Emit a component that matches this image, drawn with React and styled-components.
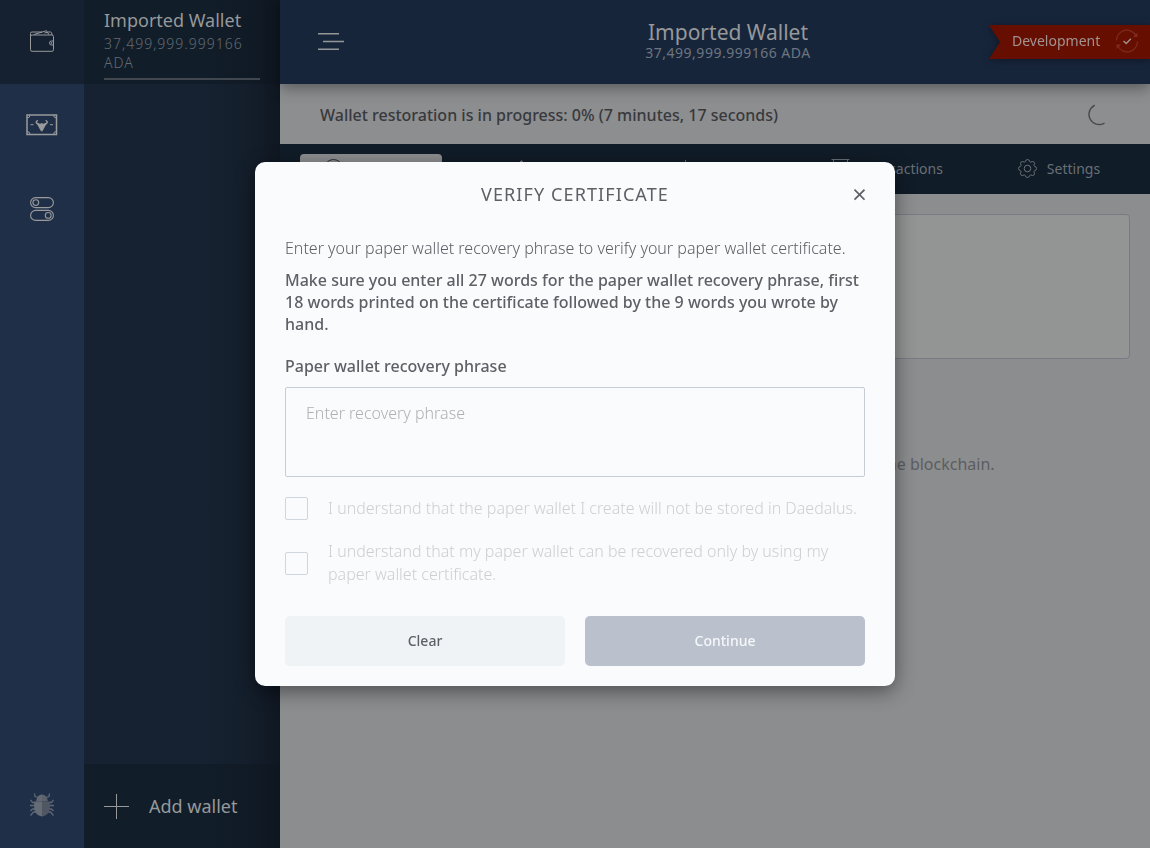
import React from 'react';
import styled, { createGlobalStyle, css } from 'styled-components';

const GlobalStyle = createGlobalStyle`
  * { box-sizing: border-box; }
  body {
    margin: 0;
    font-family: 'Noto Sans', 'Open Sans', sans-serif;
    font-size: 16px;
    overflow: hidden;
  }
`;

const Shell = styled.div`
  display: flex;
  width: 100vw;
  height: 100vh;
  overflow: hidden;
  background: #8c8d8f;
`;

/* Sidebar */
const Rail = styled.nav`
  display: flex;
  flex-direction: column;
  flex: none;
  width: 84px;
  background: #202f48;
`;

const RailItem = styled.div`
  display: flex;
  align-items: center;
  justify-content: center;
  height: 84px;
  padding-bottom: 2px;
  background: ${(p) => (p.$active ? '#152131' : 'transparent')};
  ${(p) => p.$last && css`margin-top: auto;`}
  svg { display: block; }
`;

const edgeShade = 'linear-gradient(to right, rgba(14, 20, 30, 0) 120px, rgba(14, 20, 30, 0.3) 165px, rgba(14, 20, 30, 0.8) 196px)';

const WalletPanel = styled.aside`
  display: flex;
  flex-direction: column;
  justify-content: space-between;
  flex: none;
  width: 196px;
  background: ${edgeShade}, #162231;
`;

const WalletItem = styled.div`
  height: 84px;
  padding: 8px 20px 0;
  background: ${edgeShade}, #111d29;
`;

const WalletName = styled.div`
  font-size: 18px;
  line-height: 24px;
  color: #96989a;
`;

const WalletBalance = styled.div`
  width: 145px;
  margin-top: 2px;
  font-size: 14px;
  font-weight: 300;
  line-height: 19px;
  letter-spacing: 1px;
  color: #646b74;
`;

const WalletProgress = styled.div`
  height: 2px;
  margin-top: 6px;
  background: #41474e;
`;

const AddWallet = styled.div`
  display: flex;
  align-items: center;
  gap: 20px;
  height: 84px;
  padding-left: 20px;
  font-size: 18px;
  color: #96989a;
  background: ${edgeShade}, #111d29;
`;

/* Main area */
const Main = styled.main`
  display: flex;
  flex-direction: column;
  flex: 1;
  min-width: 0;
`;

const TopBar = styled.header`
  position: relative;
  z-index: 1;
  display: flex;
  align-items: center;
  height: 84px;
  padding-left: 38px;
  background: #17253b;
  box-shadow: 0 4px 14px rgba(0, 0, 0, 0.38);
`;

const TopTitle = styled.div`
  flex: 1;
  margin-left: 123px;
  padding-bottom: 3px;
  text-align: center;
`;

const TopName = styled.div`
  font-size: 21px;
  line-height: 24px;
  color: #96989a;
`;

const TopBalance = styled.div`
  font-size: 14px;
  line-height: 17px;
  letter-spacing: 0.5px;
  color: #6d757f;
`;

const RibbonShadow = styled.div`
  filter: drop-shadow(0 1px 4px rgba(0, 0, 0, 0.4));
`;

const Ribbon = styled.div`
  display: flex;
  align-items: center;
  justify-content: space-between;
  width: 161px;
  height: 34px;
  padding: 0 11px 2px 23px;
  clip-path: polygon(0 0, 100% 0, 100% 100%, 0 100%, 11px 50%);
  background: #660e00;
  font-size: 14px;
  color: #a09391;
`;

const RibbonLabel = styled.span`
  padding-bottom: 2px;
`;

const Restoration = styled.div`
  display: flex;
  align-items: center;
  justify-content: space-between;
  height: 60px;
  padding: 2px 40px 0 40px;
  background: #8d8e90;
  font-weight: 500;
  color: #38393c;
`;

const Tabs = styled.div`
  display: flex;
  gap: 30px;
  height: 50px;
  padding: 10px 20px 0;
  background: #101c28;
`;

const Tab = styled.div`
  display: flex;
  flex: 1;
  align-items: center;
  justify-content: center;
  gap: 10px;
  height: 30px;
  padding-bottom: 2px;
  border-radius: 4px;
  font-size: 14px;
  font-weight: ${(p) => (p.$active ? 500 : 400)};
  white-space: nowrap;
  color: ${(p) => (p.$active ? '#26303c' : '#696f75')};
  background: ${(p) => (p.$active ? '#8d8e90' : 'transparent')};
`;

const Content = styled.section`
  padding: 20px;
`;

const SummaryCard = styled.div`
  height: 145px;
  border: 1px solid #777b84;
  border-radius: 4px;
  background: #939595;
`;

const SyncMessage = styled.p`
  margin: 93px 0 0;
  line-height: 24px;
  text-align: center;
  white-space: nowrap;
  color: #5c5d5f;
`;

/* Dialog */
const Overlay = styled.div`
  position: fixed;
  inset: 0;
  z-index: 5;
  display: flex;
  align-items: center;
  justify-content: center;
`;

const Dialog = styled.div`
  width: 640px;
  height: 524px;
  padding: 20px 30px;
  border-radius: 10px;
  background: #fafbfd;
  box-shadow: 0 5px 20px rgba(0, 0, 0, 0.45);
  color: #5e6066;
`;

const DialogHeader = styled.div`
  display: grid;
  grid-template-columns: 12px 1fr 12px;
  align-items: center;
  height: 25px;
`;

const DialogTitle = styled.h1`
  grid-column: 2;
  margin: 0;
  font-size: 18px;
  font-weight: 400;
  line-height: 25px;
  letter-spacing: 1.1px;
  text-align: center;
  text-transform: uppercase;
`;

const Paragraph = styled.p`
  margin: ${(p) => (p.$strong ? '10px 0 20px' : '30px 0 0')};
  font-weight: ${(p) => (p.$strong ? 500 : 300)};
  line-height: 22px;
`;

const FieldLabel = styled.label`
  display: block;
  margin-bottom: 10px;
  font-weight: 500;
  line-height: 22px;
`;

const PhraseInput = styled.textarea`
  display: block;
  width: 100%;
  height: 90px;
  padding: 14px 20px;
  border: 1px solid #c6cdd6;
  border-radius: 2px;
  outline: none;
  resize: none;
  background: transparent;
  font: 300 16px/22px 'Noto Sans', 'Open Sans', sans-serif;
  &::placeholder { color: #afb0b3; opacity: 1; }
`;

const CheckRow = styled.div`
  display: flex;
  align-items: center;
  gap: 20px;
  margin-top: 20px;
  font-weight: 300;
  line-height: 23px;
  color: #cecfd2;
`;

const CheckBox = styled.span`
  flex: none;
  width: 23px;
  height: 23px;
  border: 1px solid #cfd6e0;
  border-radius: 2px;
`;

const Actions = styled.div`
  display: flex;
  gap: 20px;
  margin-top: 30px;
`;

const Button = styled.button`
  flex: 1;
  height: 50px;
  padding: 0 0 2px;
  border: 0;
  border-radius: 5px;
  font: 500 14px 'Noto Sans', 'Open Sans', sans-serif;
  color: ${(p) => (p.$primary ? '#f5f7f9' : '#5e6066')};
  background: ${(p) => (p.$primary ? '#bac1cd' : '#eff3f6')};
`;

const WalletIcon = () => (
  <svg width="24" height="22" viewBox="0 0 24 22" fill="none" stroke="#989a9b" strokeWidth="1">
    <rect x=".5" y="5" width="23" height="16.3" rx="1.6" />
    <path d="M.5 6.500V3.400Q.5 2 2 2h10M4 4.500 16.500.7l2.400 4M14.500 3l3-.8M18 2h2.600q1.400 0 1.400 3" />
    <path d="M23.500 11h-2a2 2 0 0 0 0 4h2" />
    <circle cx="21.600" cy="13" r=".5" />
  </svg>
);

const AdaIcon = () => (
  <svg width="32" height="22" viewBox="0 0 32 22" fill="none" stroke="#989a9b">
    <rect x="1" y="1" width="29.500" height="19.500" strokeWidth="1.500" />
    <path d="M1 4a3 3 0 0 0 3-3M27.500 1a3 3 0 0 0 3 3M30.500 17.500a3 3 0 0 0-3 3M4 20.500a3 3 0 0 0-3-3M4.500 10.700h3M24 10.700h3" />
    <path d="M11.800 6.300Q8 9 13 10M19.700 6.300Q23.500 9 18.500 10" strokeWidth="1.400" />
    <path
      stroke="none"
      fill="#989a9b"
      d="M10.500 9.500l3 .2 2.200-.5 2.200.5 3-.2-1.500 2.200-1.300 2.500-1.700 3h-1.400l-1.700-3-1.300-2.500Z"
    />
  </svg>
);

const TogglesIcon = () => (
  <svg width="24" height="24" viewBox="0 0 24 24" fill="none" stroke="#989a9b" strokeWidth="1.100">
    <rect x=".6" y=".6" width="22.800" height="10" rx="5" />
    <circle cx="5.800" cy="5.600" r="2.900" />
    <rect x=".6" y="13.400" width="22.800" height="10" rx="5" />
    <circle cx="18.200" cy="18.400" r="2.900" />
  </svg>
);

const BugIcon = () => (
  <svg width="24" height="24" viewBox="0 0 24 24" fill="none" stroke="#5d6775" strokeWidth="1.300">
    <path d="M8 4.500 5 3.500 4.500.5M16 4.500l3-1 .5-3M5 9.500H2.500L.5 6.800M19 9.500h2.500l2-2.700M5 12.500H0M19 12.500h5M5 16H2.500l-2 2M19 16h2.500l2 2M6 19H3.500L.5 22.500M18 19h2.500l3 3.500" />
    <path stroke="none" fill="#626973" d="M12 1.500q-5 0-6 7h6Z" />
    <path stroke="none" fill="#5b626d" d="M12 1.500q5 0 6 7h-6Z" />
    <path stroke="none" fill="#666c76" d="M12 8.500H4.200V15.500Q4.800 22 12 23.500Z" />
    <path stroke="none" fill="#505763" d="M12 8.500h7.800V15.500Q19.200 22 12 23.500Z" />
  </svg>
);

const PlusIcon = () => (
  <svg width="25" height="25" viewBox="0 0 25 25" stroke="#96989a">
    <path d="M12.500 0v25M0 12.500h25" />
  </svg>
);

const MenuIcon = () => (
  <svg width="26" height="18" viewBox="0 0 26 18" stroke="#949698" strokeWidth="1.400">
    <path d="M0 .8h21M5 8.500h21M0 16.200h21" />
  </svg>
);

const SyncedIcon = () => (
  <svg width="24" height="24" viewBox="0 0 24 24" fill="none">
    <g stroke="#7e2b20" strokeWidth="1.200">
      <path d="M1.500 11.500A10.300 10.300 0 0 1 21 6.800M22.500 12.500A10.300 10.300 0 0 1 3 17.200" />
      <path fill="#7e2b20" stroke="none" d="M22.500 3.500v4.500h-4.500ZM1.500 20v-4.500H6Z" />
    </g>
    <path d="m8.500 12 2.700 2.500 4.700-4.700" stroke="#a09391" strokeWidth="1.300" />
  </svg>
);

const SpinnerIcon = () => (
  <svg width="22" height="22" viewBox="0 0 22 22" fill="none" stroke="#4a4b4e" strokeWidth="1.500" strokeLinecap="round">
    <path d="M6.300 1.500A10 10 0 0 0 16 19.300" />
  </svg>
);

const SummaryIcon = () => (
  <svg width="19" height="19" viewBox="0 0 19 19" fill="none" stroke="#26303c">
    <circle cx="9.500" cy="9.500" r="9" />
    <path d="M9.500 4v6l4 2" />
  </svg>
);

const SendIcon = () => (
  <svg width="19" height="19" viewBox="0 0 19 19" fill="none" stroke="#696f75">
    <path d="M9.500 14V1.500M6 5 9.500 1.500 13 5M1 11v7h17v-7" />
  </svg>
);

const ReceiveIcon = () => (
  <svg width="19" height="19" viewBox="0 0 19 19" fill="none" stroke="#696f75">
    <path d="M9.500 1v13M6 10.500 9.500 14l3.500-3.500M1 11v7h17v-7" />
  </svg>
);

const TransactionsIcon = () => (
  <svg width="19" height="19" viewBox="0 0 19 19" fill="none" stroke="#696f75">
    <path d="M.5.5h18M2.500.5v18l2.300-2 2.300 2 2.400-2 2.300 2 2.300-2 2.400 2V.5M6 6h7M6 10h7" />
  </svg>
);

const GearIcon = () => (
  <svg width="19" height="19" viewBox="0 0 19 19" fill="none" stroke="#696f75" strokeLinejoin="round">
    <path d="M7.300 2.600Q7.700.5 9.500.5t2.200 2.100q.5.6 1.200.5 1.900-1.200 3.100 0t0 3.100q0 .7.500 1.100 2.100.4 2.100 2.200t-2.100 2.200q-.6.5-.5 1.200 1.200 1.900 0 3.100t-3.100 0q-.7 0-1.200.5-.4 2.100-2.200 2.100t-2.200-2.100q-.5-.6-1.200-.5-1.900 1.200-3.100 0t0-3.100q0-.7-.5-1.200Q.5 11.300.5 9.500t2.100-2.200q.6-.4.500-1.100-1.200-1.900 0-3.100t3.100 0q.7 0 1.100-.5Z" />
    <circle cx="9.500" cy="9.500" r="3.300" />
  </svg>
);

const CloseIcon = () => (
  <svg width="12" height="12" viewBox="0 0 12 12" stroke="#5e6066" strokeWidth="1.700">
    <path d="m1.500.7 10 10M11.500.7l-10 10" />
  </svg>
);

const tabs = [
  { label: 'Summary', Icon: SummaryIcon, active: true },
  { label: 'Send', Icon: SendIcon },
  { label: 'Receive', Icon: ReceiveIcon },
  { label: 'Transactions', Icon: TransactionsIcon },
  { label: 'Settings', Icon: GearIcon },
];

export default function App() {
  return (
    <>
      <GlobalStyle />
      <Shell>
        <Rail>
          <RailItem $active><WalletIcon /></RailItem>
          <RailItem><AdaIcon /></RailItem>
          <RailItem><TogglesIcon /></RailItem>
          <RailItem $last><BugIcon /></RailItem>
        </Rail>
        <WalletPanel>
          <WalletItem>
            <WalletName>Imported Wallet</WalletName>
            <WalletBalance>37,499,999.999166 ADA</WalletBalance>
            <WalletProgress />
          </WalletItem>
          <AddWallet><PlusIcon />Add wallet</AddWallet>
        </WalletPanel>
        <Main>
          <TopBar>
            <MenuIcon />
            <TopTitle>
              <TopName>Imported Wallet</TopName>
              <TopBalance>37,499,999.999166 ADA</TopBalance>
            </TopTitle>
            <RibbonShadow>
              <Ribbon><RibbonLabel>Development</RibbonLabel><SyncedIcon /></Ribbon>
            </RibbonShadow>
          </TopBar>
          <Restoration>
            <span>Wallet restoration is in progress: 0% (7 minutes, 17 seconds)</span>
            <SpinnerIcon />
          </Restoration>
          <Tabs>
            {tabs.map(({ label, Icon, active }) => (
              <Tab key={label} $active={active}><Icon />{label}</Tab>
            ))}
          </Tabs>
          <Content>
            <SummaryCard />
            <SyncMessage>Your transaction history for this wallet is being synced with the blockchain.</SyncMessage>
          </Content>
        </Main>
      </Shell>
      <Overlay>
        <Dialog role="dialog">
          <DialogHeader>
            <DialogTitle>Verify certificate</DialogTitle>
            <CloseIcon />
          </DialogHeader>
          <Paragraph>Enter your paper wallet recovery phrase to verify your paper wallet certificate.</Paragraph>
          <Paragraph $strong>
            Make sure you enter all 27 words for the paper wallet recovery phrase, first 18 words printed on the
            certificate followed by the 9 words you wrote by hand.
          </Paragraph>
          <FieldLabel htmlFor="phrase">Paper wallet recovery phrase</FieldLabel>
          <PhraseInput id="phrase" placeholder="Enter recovery phrase" />
          <CheckRow>
            <CheckBox />
            <span>I understand that the paper wallet I create will not be stored in Daedalus.</span>
          </CheckRow>
          <CheckRow>
            <CheckBox />
            <span>I understand that my paper wallet can be recovered only by using my paper wallet certificate.</span>
          </CheckRow>
          <Actions>
            <Button>Clear</Button>
            <Button $primary>Continue</Button>
          </Actions>
        </Dialog>
      </Overlay>
    </>
  );
}
